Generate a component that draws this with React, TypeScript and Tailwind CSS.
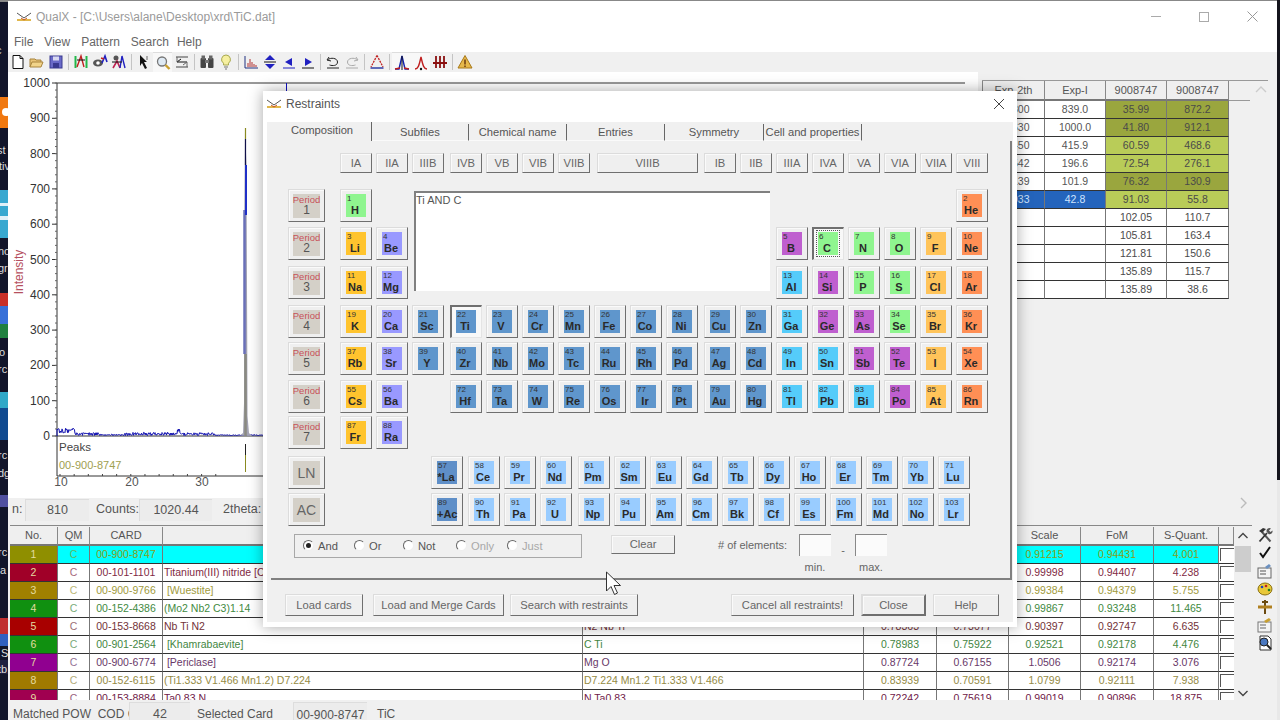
import React from "react";

type El = [number, string, number, string, string];
const C = {
  g: "bg-[#8ff58f]",
  a: "bg-[#ffc42e]",
  e: "bg-[#9999ff]",
  t: "bg-[#5f96cc]",
  m: "bg-[#bf5fcf]",
  p: "bg-[#55ccfa]",
  h: "bg-[#ffc45a]",
  n: "bg-[#ff8f55]",
  l: "bg-[#99ccff]",
  d: "bg-[#5f8fc8]",
};
const seq = (row: number, col: number, start: number, syms: string, kinds: string[]): El[] =>
  syms.split(" ").map((s, i) => [row, s, col + i, String(start + i), kinds[i]] as El);
const rep = (k: string, n: number) => Array(n).fill(k) as string[];

const ELEMENTS: El[] = [
  ...seq(2, 2, 1, "H", ["g"]),
  ...seq(2, 19, 2, "He", ["n"]),
  ...seq(3, 2, 3, "Li Be", ["a", "e"]),
  ...seq(3, 14, 5, "B C N O F Ne", ["m", "g", "g", "g", "h", "n"]),
  ...seq(4, 2, 11, "Na Mg", ["a", "e"]),
  ...seq(4, 14, 13, "Al Si P S Cl Ar", ["p", "m", "g", "g", "h", "n"]),
  ...seq(5, 2, 19, "K Ca Sc Ti V Cr Mn Fe Co Ni Cu Zn Ga Ge As Se Br Kr", ["a", "e", ...rep("t", 10), "p", "m", "m", "g", "h", "n"]),
  ...seq(6, 2, 37, "Rb Sr Y Zr Nb Mo Tc Ru Rh Pd Ag Cd In Sn Sb Te I Xe", ["a", "e", ...rep("t", 10), "p", "p", "m", "m", "h", "n"]),
  ...seq(7, 2, 55, "Cs Ba", ["a", "e"]),
  ...seq(7, 5, 72, "Hf Ta W Re Os Ir Pt Au Hg Tl Pb Bi Po At Rn", [...rep("t", 9), "p", "p", "p", "m", "h", "n"]),
  ...seq(8, 2, 87, "Fr Ra", ["a", "e"]),
];
const LAN = "La Ce Pr Nd Pm Sm Eu Gd Tb Dy Ho Er Tm Yb Lu".split(" ");
const ACT = "Ac Th Pa U Np Pu Am Cm Bk Cf Es Fm Md No Lr".split(" ");
const GROUPS = ["IA", "IIA", "IIIB", "IVB", "VB", "VIB", "VIIB", "", "", "", "IB", "IIB", "IIIA", "IVA", "VA", "VIA", "VIIA", "VIII"];

const raised = "bg-[#efefef] border border-t-[#dcdcdc] border-l-[#dcdcdc] border-r-[#6f6f6f] border-b-[#6f6f6f] shadow-[inset_1px_1px_0_#fafafa]";
const sunken = "bg-[#f8f8f8] border-t-2 border-l-2 border-r border-b border-t-[#6f6f6f] border-l-[#6f6f6f] border-r-[#e4e4e4] border-b-[#e4e4e4] pr-[1px] pb-[2px]";

function ElBtn({ num, sym, kind, state }: { num: string; sym: string; kind: string; state?: string }) {
  const outer = state ? sunken : raised;
  return (
    <div className={`w-[32px] h-[33px] flex items-center justify-center ${outer}`}>
      <div className={`w-[20px] h-[23px] flex flex-col ${(C as Record<string, string>)[kind]} ${state === "focus" ? "outline-1 outline-dotted outline-offset-[1px] outline-[#555]" : ""}`}>
        <span className="text-[8px] leading-[9px] pl-[1px] text-[#333] whitespace-nowrap">{num}</span>
        <span className="text-[11px] leading-[14px] font-bold text-center text-[#2a2a2a] whitespace-nowrap pr-[2px]">{sym}</span>
      </div>
    </div>
  );
}

function Period({ top, bottom }: { top?: string; bottom: string }) {
  return (
    <div className={`w-[37px] h-[33px] flex items-center justify-center ${raised}`}>
      <div className="w-[27px] h-[24px] bg-[#d4d0c8] flex flex-col items-center justify-center">
        {top ? (
          <>
            <span className="text-[9.5px] leading-[10px] text-[#c85058]">{top}</span>
            <span className="text-[12px] leading-[11px] text-[#555]">{bottom}</span>
          </>
        ) : (
          <span className="text-[14px] leading-[14px] text-[#666]">{bottom}</span>
        )}
      </div>
    </div>
  );
}

function Radio({ label, on, off, w }: { label: string; on?: boolean; off?: boolean; w: string }) {
  return (
    <div className={`flex items-center gap-[4px] ${w} ${off ? "text-[#a8a8a8]" : "text-[#555]"}`}>
      <div className={`w-[11px] h-[11px] rounded-full bg-white border border-t-[#666] border-l-[#666] border-r-[#eee] border-b-[#eee] flex items-center justify-center`}>
        {on && <div className="w-[5px] h-[5px] rounded-full bg-[#222]" />}
      </div>
      <span className="text-[11.2px]">{label}</span>
    </div>
  );
}

function Btn({ w, label, strong, ml }: { w: string; label: string; strong?: boolean; ml?: string }) {
  return (
    <div className={`h-[22px] ${w} ${ml ?? ""} flex items-center justify-center text-[11.2px] text-[#666] ${raised} ${strong ? "border-[#666] border-2" : ""}`}>
      {label}
    </div>
  );
}

function Logo() {
  return (
    <svg width="17" height="12" viewBox="0 0 17 12" className="shrink-0">
      <path d="M1 2 L8 7 L15 2" fill="none" stroke="#555" strokeWidth="1" />
      <path d="M1 9 H15" stroke="#d9a520" strokeWidth="1.6" />
      <path d="M5 7 L8 9 L11 7" fill="none" stroke="#cc5522" strokeWidth="1" />
    </svg>
  );
}

const Ico = ({ children }: { children: React.ReactNode }) => (
  <svg width="16" height="16" viewBox="0 0 16 16" fill="none">{children}</svg>
);

const TOOLS: (React.ReactNode | string)[] = [
  <Ico><path d="M3 1.5h7l3 3v10H3z" fill="#fff" stroke="#111" /><path d="M10 1.5v3h3" stroke="#111" /></Ico>,
  <Ico><path d="M1 13V5h5l1 1h5v2" fill="#e9c478" stroke="#a8843c" /><path d="M1 13l2-5h11l-2 5z" fill="#f2d48a" stroke="#a8843c" /></Ico>,
  <Ico><rect x="2" y="2" width="12" height="12" fill="#6a6ac8" stroke="#3a3a90" /><rect x="5" y="2.5" width="6" height="4" fill="#d8d8f0" /><rect x="5" y="9" width="6" height="5" fill="#3a3a90" /></Ico>,
  "sep",
  <Ico><path d="M2.5 2v12M13.5 2v12" stroke="#22b84a" strokeWidth="2" /><path d="M4 13 L8 2 L11 13" stroke="#c02020" strokeWidth="1.4" /><path d="M4 6h8" stroke="#111" /></Ico>,
  <Ico><ellipse cx="6" cy="9" rx="5" ry="3.5" fill="#555" /><circle cx="6" cy="9" r="1.8" fill="#fff" /><path d="M10 9 L13 2 L15 8" stroke="#2020c0" strokeWidth="1.6" /><path d="M9 4l3 1" stroke="#c02020" strokeWidth="1.4" /></Ico>,
  <Ico><circle cx="5" cy="4" r="2.5" fill="#555" /><path d="M2 14 L6 7 L9 14" stroke="#c02050" strokeWidth="1.6" /><path d="M9 14 L11 2 L14 14" stroke="#2020c0" strokeWidth="1.4" /><path d="M1 8h10" stroke="#111" /></Ico>,
  "sep",
  <Ico><path d="M4 1l7 7H8l3 6-2 1-3-6-2 3z" fill="#111" /><path d="M11 2v4" stroke="#666" /></Ico>,
  <Ico><circle cx="7" cy="6.5" r="4.5" fill="#dfeaf4" stroke="#777" strokeWidth="1.3" /><path d="M10.5 10l4 4" stroke="#c9a030" strokeWidth="2.4" /></Ico>,
  <Ico><path d="M2 3h12M2 13h12" stroke="#444" /><path d="M7 5L3 8h10" stroke="#111" /><path d="M9 11l4-3" stroke="#666" /><path d="M3 3v5M13 8v5" stroke="#666" /></Ico>,
  "sep",
  <Ico><rect x="1.5" y="4" width="5.5" height="10" rx="1" fill="#444" /><rect x="9" y="4" width="5.5" height="10" rx="1" fill="#444" /><rect x="2.5" y="1.5" width="3.5" height="4" fill="#666" /><rect x="10" y="1.5" width="3.5" height="4" fill="#666" /><rect x="6" y="6" width="4" height="3" fill="#777" /></Ico>,
  <Ico><path d="M8 1a4.5 4.5 0 0 0-2.5 8.2V11h5V9.2A4.5 4.5 0 0 0 8 1z" fill="#f6f0a0" stroke="#a8a850" /><path d="M6 13h4M7 15h2" stroke="#777" /></Ico>,
  "sep",
  <Ico><path d="M2 2v12h13" stroke="#203080" /><path d="M5 13V9M7 13V5M9 13V8M11 13V10M13 13v-2" stroke="#b03030" /></Ico>,
  <Ico><path d="M8 1L3 6h10z" fill="#2020c0" /><path d="M8 15l-5-5h10z" fill="#2020c0" /><path d="M2 8h12" stroke="#111" /></Ico>,
  <Ico><path d="M4 8l7-4v8z" fill="#2020c0" /><path d="M2 14h12" stroke="#2020c0" /></Ico>,
  <Ico><path d="M12 8L5 4v8z" fill="#2020c0" /><path d="M2 14h12" stroke="#111" /></Ico>,
  "sep",
  <Ico><path d="M4 3L2 6l4 1" stroke="#222" /><path d="M2.5 6c3-3 10-2 10 2s-5 4-8 3" stroke="#222" /><path d="M2 14h12" stroke="#222" /></Ico>,
  <Ico><path d="M12 3l2 3-4 1" stroke="#aaa" /><path d="M13.5 6c-3-3-10-2-10 2s5 4 8 3" stroke="#aaa" /><path d="M2 14h12" stroke="#aaa" /></Ico>,
  "sep",
  <Ico><path d="M8 1.5L2 13" stroke="#c02020" strokeWidth="1.3" strokeDasharray="2 1" /><path d="M8 1.5L14 13" stroke="#c02020" strokeWidth="1.3" strokeDasharray="2 1" /><path d="M1.5 14h13" stroke="#2030a0" strokeWidth="1.4" /></Ico>,
  "sep",
  <Ico><path d="M1 14h4L8 1l3 13h4" stroke="#1020b0" strokeWidth="1.4" /><path d="M8 1v14" stroke="#111" /><path d="M1 14l5-1M15 14l-5-1" stroke="#c02020" strokeWidth="1.4" /></Ico>,
  <Ico><path d="M2 14c3 0 4-3 6-12 2 9 3 12 6 12" stroke="#c02020" strokeWidth="1.4" /><circle cx="8" cy="14" r="1.2" fill="#111" /></Ico>,
  <Ico><path d="M1 9h14" stroke="#8a1010" strokeWidth="2" /><path d="M4 2v12M8 2v12M12 2v12" stroke="#8a1010" strokeWidth="1.8" /></Ico>,
  "sep",
  <Ico><path d="M8 1.5L1 14h14z" fill="#e6b84a" stroke="#a87818" /><path d="M8 5.5v5M8 11.5v1.5" stroke="#6a3a10" strokeWidth="1.5" /></Ico>,
];

const SIDE: React.ReactNode[] = [
  <Ico><path d="M13.5 14.5L5 5" stroke="#555" strokeWidth="2" /><path d="M2 4l4-3 3 1-4 4z" fill="#333" /><path d="M2.5 14.5L10 6" stroke="#333" strokeWidth="1.8" /><path d="M9.5 4.5a3 3 0 0 1 4.5-3l-2 2 1.5 1.5 2-1.5a3 3 0 0 1-4 3.5z" fill="#555" /></Ico>,
  <Ico><path d="M3 8l3 4 7-10" stroke="#111" strokeWidth="2" /></Ico>,
  <Ico><rect x="1" y="5" width="13" height="10" fill="#f4f4f4" stroke="#666" /><path d="M3 8h6M3 11h6" stroke="#555" /><path d="M8 4l4-3 2 2-4 3z" fill="#6a90c0" /></Ico>,
  <Ico><ellipse cx="8" cy="8" rx="7" ry="6" fill="#e8c83a" stroke="#8a7010" /><circle cx="5" cy="6" r="1.3" fill="#2040c0" /><circle cx="9" cy="5" r="1.3" fill="#c02020" /><circle cx="12" cy="9" r="1.3" fill="#208020" /></Ico>,
  <Ico><path d="M8 1v14" stroke="#6a4a10" strokeWidth="2" /><path d="M1 8h14" stroke="#b08020" strokeWidth="3" /><path d="M5 3h6" stroke="#6a4a10" strokeWidth="2" /></Ico>,
  <Ico><rect x="1" y="5" width="13" height="10" fill="#f4f4f4" stroke="#777" /><path d="M3 8h6M3 11h6" stroke="#666" /><path d="M7 4l5-3 2 2-5 3z" fill="#c9a030" /></Ico>,
  <Ico><path d="M3 1h8l3 3v11H3z" fill="#fff" stroke="#333" /><circle cx="7" cy="7" r="4" fill="#4a78c0" stroke="#222" /><path d="M10 10l4 4" stroke="#222" strokeWidth="2" /></Ico>,
];

const ROWS = [
  { bg: "bg-[#8f8f00]", fg: "text-[#8a9c18]", card: "00-900-8747", name: "", formula: "", a: "", b: "", s: "0.91215", f: "0.94431", q: "4.001", hi: true },
  { bg: "bg-[#a00028]", fg: "text-[#7f2a44]", card: "00-101-1101", name: "Titanium(III) nitride [C", formula: "N Ti", a: "0.81231", b: "0.77412", s: "0.99998", f: "0.94407", q: "4.238" },
  { bg: "bg-[#a08000]", fg: "text-[#a09a3c]", card: "00-900-9766", name: " [Wuestite]", formula: "Fe O", a: "0.79812", b: "0.76211", s: "0.99384", f: "0.94379", q: "5.755" },
  { bg: "bg-[#109010]", fg: "text-[#3f8a3f]", card: "00-152-4386", name: "(Mo2 Nb2 C3)1.14", formula: "C3.42 Mo2.28 Nb2.28", a: "0.80214", b: "0.75533", s: "0.99867", f: "0.93248", q: "11.465" },
  { bg: "bg-[#a80000]", fg: "text-[#733238]", card: "00-153-8668", name: "Nb Ti N2", formula: "N2 Nb Ti", a: "0.78363", b: "0.73077", s: "0.90397", f: "0.92747", q: "6.635" },
  { bg: "bg-[#109010]", fg: "text-[#43863f]", card: "00-901-2564", name: " [Khamrabaevite]", formula: "C Ti", a: "0.78983", b: "0.75922", s: "0.92521", f: "0.92178", q: "4.476" },
  { bg: "bg-[#900090]", fg: "text-[#683868]", card: "00-900-6774", name: " [Periclase]", formula: "Mg O", a: "0.87724", b: "0.67155", s: "1.0506", f: "0.92174", q: "3.076" },
  { bg: "bg-[#a07a00]", fg: "text-[#948a44]", card: "00-152-6115", name: "(Ti1.333 V1.466 Mn1.2) D7.224", formula: "D7.224 Mn1.2 Ti1.333 V1.466", a: "0.83939", b: "0.70591", s: "1.0799", f: "0.92111", q: "7.938" },
  { bg: "bg-[#a00050]", fg: "text-[#702048]", card: "00-153-8884", name: "Ta0.83 N", formula: "N Ta0.83", a: "0.72242", b: "0.75619", s: "0.99019", f: "0.90896", q: "18.875" },
];

const PEAKS = [
  ["35.800", "839.0", "35.99", "872.2", 1],
  ["41.630", "1000.0", "41.80", "912.1", 1],
  ["60.450", "415.9", "60.59", "468.6", 0],
  ["72.542", "196.6", "72.54", "276.1", 0],
  ["76.139", "101.9", "76.32", "130.9", 1],
  ["91.033", "42.8", "91.03", "55.8", 2],
  ["", "", "102.05", "110.7", 3],
  ["", "", "105.81", "163.4", 3],
  ["", "", "121.81", "150.6", 3],
  ["", "", "135.89", "115.7", 3],
  ["", "", "135.89", "38.6", 3],
] as const;

function noisePath() {
  let d = "M57 436";
  for (let x = 57; x <= 263; x += 0.5) {
    const r = Math.abs(Math.sin(x * 12.9898) * 43758.5453) % 1;
    const env = x < 75 ? 5 : x < 100 ? 3 : x < 125 ? 1.2 : x < 170 ? 3.2 : x < 215 ? 2.8 : 0.8;
    const spike = x > 177 && x < 180 ? 4 : 0;
    d += ` L${x} ${(435.5 - r * env - (x < 75 ? 2.5 : 0) - spike).toFixed(1)}`;
  }
  return d;
}

function Chart() {
  const yLabels = [1000, 900, 800, 700, 600, 500, 400, 300, 200, 100, 0];
  return (
    <svg width="970" height="426" viewBox="8 72 970 426" className="block">
      <path d="M57 83H965M57 83V476M57 476H965M57 436H965" stroke="#333" strokeWidth="1" fill="none" />
      {yLabels.map((v, i) => (
        <g key={v}>
          <path d={`M52 ${83 + i * 35.3}H57`} stroke="#333" />
          <text x="50" y={87 + i * 35.3} textAnchor="end" fontSize="12" fill="#333">{v}</text>
        </g>
      ))}
      {Array.from({ length: 51 }).map((_, i) => (
        <path key={i} d={`M55 ${83 + i * 7.06}H57`} stroke="#666" />
      ))}
      {Array.from({ length: 12 }).map((_, i) => (
        <path key={i} d={`M${60 + i * 14.16} 476v-2`} stroke="#444" />
      ))}
      {[[61, "10"], [132, "20"], [202, "30"]].map(([x, t]) => (
        <text key={t} x={x} y="486" textAnchor="middle" fontSize="12" fill="#555">{t}</text>
      ))}
      <text transform="translate(23 272) rotate(-90)" textAnchor="middle" fontSize="12" fill="#b5505e">Intensity</text>
      <text x="59" y="451" fontSize="11.5" fill="#444">Peaks</text>
      <text x="59" y="469" fontSize="11" fill="#a0a050">00-900-8747</text>
      <path d={noisePath()} stroke="#1010b0" strokeWidth="1" fill="none" />
      <path d="M240 435.5 L243 433 L244 403 L244.3 210 L245 128 L246.5 165 L247.3 354 L247.5 416 L249 433 L252 436" fill="#a4a4b4" />
      <path d="M244.5 210V354" stroke="#6a70b8" strokeWidth="2.5" />
      <path d="M246 165V215" stroke="#2030c8" strokeWidth="2" />
      <path d="M245.5 139V165" stroke="#10104a" strokeWidth="1.2" />
      <path d="M245.5 128V139" stroke="#8a8a20" strokeWidth="1.2" />
      <path d="M245.5 354V436" stroke="#8a8a80" strokeWidth="2.5" />
      <path d="M245.5 444V455" stroke="#222" />
      <path d="M245.5 455V472" stroke="#8a8a20" />
      <path d="M286.5 83V92" stroke="#1010c0" />
    </svg>
  );
}

function Desktop() {
  return (
    <svg width="8" height="720" viewBox="0 0 8 720" className="block shrink-0">
      <rect width="8" height="720" fill="#12152a" />
      <rect y="0" width="8" height="2" fill="#888" />
      <rect y="97" width="8" height="31" fill="#f07810" />
      <circle cx="6" cy="112" r="4" fill="#fff" />
      <rect y="190" width="8" height="48" fill="#38a8d0" />
      <rect y="203" width="8" height="3" fill="#e0f0f8" />
      <rect y="216" width="8" height="4" fill="#e0f0f8" />
      <rect y="293" width="8" height="13" fill="#c83028" />
      <rect y="306" width="8" height="18" fill="#3870d8" />
      <rect y="324" width="8" height="14" fill="#208040" />
      <rect y="392" width="8" height="16" fill="#30a8c8" />
      <rect y="408" width="8" height="32" fill="#104a90" />
      <rect y="495" width="8" height="12" fill="#5050a0" />
      <rect y="618" width="8" height="16" fill="#c03030" />
      <rect y="634" width="8" height="12" fill="#3060c0" />
      <rect y="660" width="8" height="14" fill="#202040" />
      <g fontSize="11" fill="#ddd" fontFamily="Liberation Sans, sans-serif">
        <text x="-4" y="54">c</text>
        <text x="-3" y="154">st</text>
        <text x="-1" y="170">tiv</text>
        <text x="-2" y="255">no</text>
        <text x="-2" y="272">gr</text>
        <text x="-1" y="356">o</text>
        <text x="-2" y="373">rc</text>
        <text x="-2" y="459">rc</text>
        <text x="-2" y="477">dg</text>
        <text x="-2" y="556">rc</text>
        <text x="0" y="574">a</text>
        <text x="1" y="657">S</text>
        <text x="-2" y="673">tb</text>
      </g>
    </svg>
  );
}

export default function App() {
  return (
    <div className="relative w-[1280px] h-[720px] overflow-hidden flex bg-[#12152a] font-['Liberation_Sans',sans-serif]">
      <Desktop />
      <div className="w-[1269px] shrink-0 flex flex-col bg-[#f0f0f0]">
        {/* title */}
        <div className="h-[30px] shrink-0 bg-white border-t border-[#888] flex items-center pl-[8px] pt-[2px] relative">
          <Logo />
          <span className="ml-[3px] text-[12px] text-[#9a9a9a]">QualX - [C:\Users\alane\Desktop\xrd\TiC.dat]</span>
          <div className="ml-auto flex items-center text-[#aaa] pr-[1px]">
            <div className="w-[48px] flex justify-center"><div className="w-[10px] h-px bg-[#aaa]" /></div>
            <div className="w-[48px] flex justify-center"><div className="w-[10px] h-[10px] border border-[#aaa]" /></div>
            <div className="w-[48px] flex justify-center">
              <svg width="11" height="11" viewBox="0 0 11 11"><path d="M0.5 0.5l10 10M10.5 0.5l-10 10" stroke="#999" /></svg>
            </div>
          </div>
        </div>
        {/* menu */}
        <div className="h-[22px] shrink-0 bg-white flex items-center pl-[6px] pt-[2px] gap-[11px] text-[12px] text-[#666]">
          <span>File</span><span>View</span><span>Pattern</span><span>Search</span><span className="-ml-[3px]">Help</span>
        </div>
        {/* toolbar */}
        <div className="h-[20px] shrink-0 flex items-center">
          {TOOLS.map((t, i) =>
            t === "sep" ? (
              <div key={i} className="w-[6px] h-[16px] flex justify-center"><div className="w-px h-full bg-[#c4c4c4]" /></div>
            ) : (
              <div key={i} className={`w-[19px] h-[20px] flex items-center justify-center ${i === 9 || i === 25 || i === 26 ? "bg-[#f8f8f8] border-t border-[#ddd]" : ""}`}>{t}</div>
            )
          )}
        </div>
        {/* upper */}
        <div className="h-[448px] shrink-0 flex">
          <div className="w-[970px] shrink-0 flex flex-col">
            <div className="h-[426px] bg-white"><Chart /></div>
            <div className="h-[22px] flex items-center text-[12.5px] text-[#555] pl-[4px] pt-[1px] whitespace-nowrap">
              <span className="w-[13px]">n:</span>
              <div className="w-[64px] h-[22px] bg-[#ececec] border-t border-l border-[#ddd] flex items-center justify-center">810</div>
              <span className="ml-[7px] w-[43px]">Counts:</span>
              <div className="w-[73px] h-[22px] bg-[#ececec] border-t border-l border-[#ddd] flex items-center justify-center">1020.44</div>
              <span className="ml-[11px]">2theta:</span>
            </div>
          </div>
          <div className="flex-1 flex flex-col pl-[4px] pt-[8px] bg-[#f0f0f0]">
            <div className="flex h-[222px] w-[286px] border-t border-[#999]">
              <div className="w-[247px] shrink-0 border-l border-[#888]">
                <div className="grid grid-cols-[62px_61px_61px_62px] h-[20px] text-[11px] text-[#555]">
                  {["Exp-2th", "Exp-I", "9008747", "9008747"].map((h, i) => (
                    <div key={i} className="flex items-center justify-center bg-[#efefef] border-r border-b-2 border-r-[#888] border-b-[#777]">{h}</div>
                  ))}
                </div>
                {PEAKS.map((r, i) => {
                  const g = r[4] === 1 ? "bg-[#9aa63e]" : r[4] === 0 || r[4] === 2 ? "bg-[#b9cc58]" : "bg-white";
                  const left = r[4] === 2 ? "bg-[#2464bc] text-[#cfe4ff]" : "bg-white text-[#555]";
                  return (
                    <div key={i} className="grid grid-cols-[62px_61px_61px_62px] h-[18px] text-[10.5px] text-center">
                      {[r[0], r[1]].map((c, j) => (
                        <div key={j} className={`${left} border-r border-b border-r-[#777] border-b-[#333] leading-[17px]`}>{c}</div>
                      ))}
                      {[r[2], r[3]].map((c, j) => (
                        <div key={j} className={`${g} text-[#4a4a4a] border-r border-b border-r-[#777] border-b-[#333] leading-[17px]`}>{c}</div>
                      ))}
                    </div>
                  );
                })}
              </div>
              <div className="flex-1 flex flex-col">
                <div className="h-[20px] border-b border-[#999] w-[21px]" />
                <svg className="absolute left-[1254px] top-[84px]" width="14" height="12" viewBox="0 0 14 12"><path d="M2 8l5-5 5 5" fill="none" stroke="#ccc" strokeWidth="1.4" /></svg>
              </div>
            </div>
            <div className="flex-1 flex items-end justify-start pl-[256px] pb-[10px]">
              <svg width="10" height="14" viewBox="0 0 10 14"><path d="M3 2l5 5-5 5" fill="none" stroke="#bbb" strokeWidth="1.4" /></svg>
            </div>
          </div>
        </div>
        {/* table */}
        <div className="h-[180px] shrink-0 flex pt-[5px] pl-[2px]">
          <div className="w-[1242px] shrink-0 flex">
            <div className="w-[1224px] shrink-0 overflow-hidden border-t border-[#888]">
              <div className="grid grid-cols-[48px_32px_73px_420px_281px_73px_72px_72px_73px_65px_15px] h-[20px] text-[11px] text-[#555] pt-[1px]">
                {["No.", "QM", "CARD", "", "", "", "", "Scale", "FoM", "S-Quant.", ""].map((h, i) => (
                  <div key={i} className="flex items-center justify-center bg-[#efefef] border-r border-b-2 border-r-[#888] border-b-[#777]">{h}</div>
                ))}
              </div>
              {ROWS.map((r, i) => (
                <div key={i} className={`grid grid-cols-[48px_32px_73px_420px_281px_73px_72px_72px_73px_65px_15px] h-[18px] text-[10.5px] whitespace-nowrap ${r.fg}`}>
                  <div className={`${r.bg} text-[#e4dca0] text-center border-r border-b border-r-[#777] border-b-[#333] leading-[17px]`}>{i + 1}</div>
                  {["C", r.card].map((c, j) => (
                    <div key={j} className={`${r.hi ? "bg-[#00ffff]" : "bg-white"} text-center border-r border-b border-r-[#777] border-b-[#333] leading-[17px]`}>
                      <span className={j === 0 ? "opacity-70" : ""}>{c}</span>
                    </div>
                  ))}
                  {[r.name, r.formula].map((c, j) => (
                    <div key={j} className={`${r.hi ? "bg-[#00ffff]" : "bg-white"} pl-[1px] border-r border-b border-r-[#777] border-b-[#333] leading-[17px] overflow-hidden whitespace-pre`}>{c}</div>
                  ))}
                  {[r.a, r.b, r.s, r.f, r.q].map((c, j) => (
                    <div key={j} className={`${r.hi ? "bg-[#00ffff]" : "bg-white"} text-center border-r border-b border-r-[#777] border-b-[#333] leading-[17px]`}>{c}</div>
                  ))}
                  <div className="bg-white border-b border-b-[#333] pl-[1px] pt-[2px]">
                    <div className="w-[16px] h-[13px] border-l border-t border-[#555]" />
                  </div>
                </div>
              ))}
            </div>
            <div className="flex-1 border-t border-[#888] bg-[#f0f0f0] flex flex-col items-center relative">
              <div className="h-[20px] flex items-center">
                <svg width="12" height="10" viewBox="0 0 12 10"><path d="M1.5 7l4.5-4.5L10.5 7" fill="none" stroke="#444" strokeWidth="1.4" /></svg>
              </div>
              <div className="w-[16px] h-[26px] bg-[#cdcdcd]" />
              <div className="mt-auto h-[12px] mb-[1px] flex items-center">
                <svg width="12" height="10" viewBox="0 0 12 10"><path d="M1.5 3l4.5 4.5L10.5 3" fill="none" stroke="#444" strokeWidth="1.4" /></svg>
              </div>
            </div>
          </div>
          <div className="flex-1 flex flex-col items-center pt-[2px] gap-[2px] bg-[#f0f0f0]">
            {SIDE.map((s, i) => (
              <div key={i} className="h-[16px] flex items-center justify-center">{s}</div>
            ))}
          </div>
        </div>
        {/* status */}
        <div className="flex-1 flex items-center pl-[5px] pt-[5px] text-[12px] text-[#555] whitespace-nowrap">
          <span className="w-[116px] overflow-hidden text-[#555]">Matched POW_COD Cards</span>
          <div className="w-[61px] h-[20px] -mt-[5px] flex items-center justify-center pt-[5px] bg-[#ececec] border-t border-l border-[#ddd] text-[12.5px]">42</div>
          <span className="ml-[7px] w-[96px]">Selected Card</span>
          <div className="w-[74px] h-[20px] -mt-[5px] flex items-center justify-center pt-[5px] bg-[#ececec] border-t border-l border-[#ddd]">00-900-8747</div>
          <span className="ml-[10px]">TiC</span>
        </div>
      </div>
      <div className="flex-1 flex flex-col">
        <div className="h-[480px] bg-[#14141c]" />
        <div className="flex-1 bg-[#e8e8e8]" />
      </div>

      {/* dialog */}
      <div className="absolute left-[263px] top-[91px] w-[754px] h-[536px] bg-white shadow-[0_0_14px_rgba(0,0,0,0.35)] flex flex-col">
        <div className="h-[31px] shrink-0 flex items-center pl-[3px] pr-[12px] pb-[5px]">
          <Logo />
          <span className="ml-[3px] text-[12px] text-[#555]">Restraints</span>
          <svg className="ml-auto" width="12" height="12" viewBox="0 0 12 12"><path d="M1 1l10 10M11 1L1 11" stroke="#444" strokeWidth="1" /></svg>
        </div>
        <div className="h-[500px] shrink-0 mx-[4px] bg-[#f0f0f0] flex flex-col">
          {/* tabs */}
          <div className="h-[19px] shrink-0 flex pl-[5px] text-[11.2px] text-[#555] whitespace-nowrap">
            <div className="w-[100px] h-[19px] flex items-center justify-center border-r border-r-[#666] pl-[1px] pb-[2px]">Composition</div>
            {[["w-[97px]", "Subfiles"], ["w-[98px]", "Chemical name"], ["w-[98px]", "Entries"], ["w-[99px]", "Symmetry"], ["w-[98px]", "Cell and properties"]].map(([w, t]) => (
              <div key={t} className={`${w} h-[17px] mt-[2px] flex items-center justify-center border-r border-r-[#666] border-b border-b-[#fafafa]`}>{t}</div>
            ))}
          </div>
          {/* page */}
          <div className="h-[439px] w-[741px] shrink-0 ml-[4px] pl-[17px] pt-[12px] border-r-2 border-b-2 border-[#808080] flex flex-col">
            <div className="grid grid-cols-[52px_36px_36px_38px_repeat(6,36px)_38px_repeat(7,36px)_32px] grid-rows-[36px_38px_39px_39px_37px_38px_36px_40px_37px_33px]">
              {GROUPS.map((g, i) =>
                g ? (
                  <div key={i} style={{ gridColumn: i + 2, gridRow: 1 }} className={`w-[32px] h-[20px] flex items-center justify-center text-[11.2px] text-[#666] ${raised}`}>{g}</div>
                ) : null
              )}
              <div style={{ gridColumn: "9 / span 3", gridRow: 1 }} className={`ml-[3px] w-[101px] h-[20px] flex items-center justify-center text-[11.2px] text-[#666] ${raised}`}>VIIIB</div>

              {[1, 2, 3, 4, 5, 6, 7].map((p) => (
                <div key={p} style={{ gridColumn: 1, gridRow: p + 1 }}><Period top="Period" bottom={String(p)} /></div>
              ))}
              <div style={{ gridColumn: 1, gridRow: 9 }}><Period bottom="LN" /></div>
              <div style={{ gridColumn: 1, gridRow: 10 }}><Period bottom="AC" /></div>

              <div style={{ gridColumn: "4 / span 10", gridRow: "2 / span 3" }} className="ml-[2px] mt-[2px] w-[356px] h-[100px] bg-white border-t-2 border-l-2 border-[#808080] text-[11px] leading-[13px] text-[#555] pt-[1px]">
                Ti AND C
              </div>

              {ELEMENTS.map((e) => (
                <div key={e[3]} style={{ gridColumn: e[2], gridRow: e[0] }}>
                  <ElBtn num={e[3]} sym={e[1]} kind={e[4]} state={e[1] === "Ti" ? "pressed" : e[1] === "C" ? "focus" : undefined} />
                </div>
              ))}

              <div style={{ gridColumn: "2 / -1", gridRow: 9 }} className="ml-[91px] grid grid-cols-[37px_36px_36px_38px_repeat(10,36px)_32px]">
                {LAN.map((s, i) => (
                  <ElBtn key={s} num={String(57 + i)} sym={i === 0 ? "*La" : s} kind={i === 0 ? "d" : "l"} />
                ))}
              </div>
              <div style={{ gridColumn: "2 / -1", gridRow: 10 }} className="ml-[91px] grid grid-cols-[37px_36px_36px_38px_repeat(10,36px)_32px]">
                {ACT.map((s, i) => (
                  <ElBtn key={s} num={String(89 + i)} sym={i === 0 ? "+Ac" : s} kind={i === 0 ? "d" : "l"} />
                ))}
              </div>
            </div>
            {/* options */}
            <div className="flex mt-[8px] ml-[6px] h-[44px]">
              <div className="w-[288px] h-[24px] border border-[#a8a8a8] flex items-center pl-[8px]">
                <Radio label="And" on w="w-[51px]" />
                <Radio label="Or" w="w-[49px]" />
                <Radio label="Not" w="w-[53px]" />
                <Radio label="Only" off w="w-[51px]" />
                <Radio label="Just" off w="w-[60px]" />
              </div>
              <div className={`ml-[29px] mt-[1px] w-[64px] h-[19px] flex items-center justify-center text-[11.2px] text-[#666] ${raised}`}>Clear</div>
              <span className="ml-[43px] mt-[4px] w-[81px] text-[11px] leading-[14px] text-[#666] whitespace-nowrap">{"# of elements:"}</span>
              <div className="flex flex-col items-center w-[32px]">
                <div className="w-[32px] h-[22px] bg-[#fbfbfb] border-t border-l border-[#888]" />
                <span className="mt-[4px] text-[11px] leading-[14px] text-[#666]">min.</span>
              </div>
              <span className="w-[24px] mt-[8px] text-center text-[11px] text-[#666]">-</span>
              <div className="flex flex-col items-center w-[32px]">
                <div className="w-[32px] h-[22px] bg-[#fbfbfb] border-t border-l border-[#888]" />
                <span className="mt-[4px] text-[11px] leading-[14px] text-[#666]">max.</span>
              </div>
            </div>
          </div>
          {/* bottom buttons */}
          <div className="flex mt-[14px] ml-[18px]">
            <Btn w="w-[78px]" label="Load cards" />
            <Btn w="w-[131px]" label="Load and Merge Cards" ml="ml-[10px]" />
            <Btn w="w-[128px]" label="Search with restraints" ml="ml-[6px]" />
            <Btn w="w-[123px]" label="Cancel all restraints!" ml="ml-[93px]" />
            <Btn w="w-[65px]" label="Close" ml="ml-[7px]" strong />
            <Btn w="w-[66px]" label="Help" ml="ml-[7px]" />
          </div>
        </div>
      </div>

      {/* cursor */}
      <svg className="absolute left-[605px] top-[571px]" width="18" height="27" viewBox="0 0 18 27">
        <path d="M1.5 1v19l4.5-4.5 3.5 8 3-1.5-3.5-7.5h6.5z" fill="#fff" stroke="#333" strokeWidth="1" />
      </svg>
    </div>
  );
}
